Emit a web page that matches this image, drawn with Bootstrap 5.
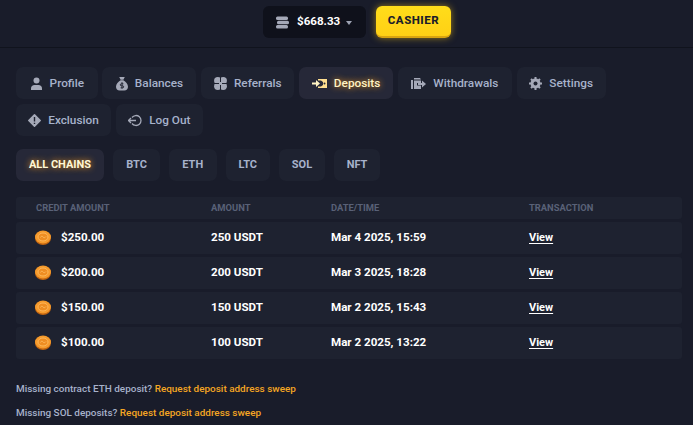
<!DOCTYPE html>
<html lang="en"><head><meta charset="utf-8"><title>Deposits</title>
<link rel="stylesheet" href="https://cdn.jsdelivr.net/npm/bootstrap@5.3.0/dist/css/bootstrap.min.css">
<style>
html,body{height:425px;overflow:hidden}
body{background:#191c2a;font-family:Roboto,"Liberation Sans",sans-serif;font-weight:500;color:#fff}
.topbar{height:48px;border-bottom:1px solid #10131d;padding:6px 0 0 263px;gap:10px}
.bal{width:103px;height:32px;background:#0f111b;border-radius:6px;font-size:11.6px;font-weight:700;padding-left:13px}
.bal svg{margin-right:8px}
.caret{width:0;height:0;border-left:3.5px solid transparent;border-right:3.5px solid transparent;border-top:4px solid #9ea3b3;margin-left:6px;margin-top:1px}
.cash{width:75px;height:32px;background:linear-gradient(#ffdd1a,#ffd015);border:0;border-bottom:2px solid #d9a410;border-radius:6px;box-shadow:0 0 7px rgba(255,200,20,.55);font-size:11.5px;font-weight:800;letter-spacing:.5px;color:#1b1d2a;padding:0}
.main{padding:19px 11px 0 16px}
.tabs{gap:5px 4.8px}
.tb{height:32px;background:#1e2230;border-radius:7px;font-size:11.8px;line-height:1;padding-top:1px;color:#a7b2cb;justify-content:center;gap:7px;text-decoration:none;white-space:nowrap}
.tb svg{flex:none}
.tb.on{color:#fff3c4;background:#262838;text-shadow:0 0 6px #ff9d1e}
.w-prof{width:81.7px}.w-bal{width:94px}.w-ref{width:93px}.w-dep{width:94px}.w-wd{width:114px}.w-set{width:89px}.w-exc{width:95px}.w-log{width:87px}
.chains{margin-top:13px;gap:9px}
.ch{height:32px;background:#1e2230;border-radius:7px;font-size:11px;font-weight:700;color:#a7b2cb;justify-content:center;text-decoration:none}
.ch.on{width:88px;background:#262838;color:#fff7d6;text-shadow:0 0 6px #ff9d1e}
.w-btc{width:47px}.w-eth{width:47.500px}.w-ltc{width:44.500px}.w-sol{width:46px}.w-nft{width:46px}
.tx{table-layout:fixed;width:666px;border-collapse:separate;border-spacing:0 3px;margin:13px 0 0;font-size:11.600px;color:#fff;font-weight:700}
.c1{width:195px}.c2{width:120px}.c3{width:198px}
.tx th{height:22px;padding:0;background:#1e2230;color:#596177;font-size:9.400px;font-weight:700;vertical-align:middle}
.tx td{height:32px;padding:0;background:#1e2230;vertical-align:middle}
.tx tr>*:first-child{padding-left:20px;border-radius:3px 0 0 3px}
.tx tr>*:last-child{border-radius:0 3px 3px 0}
.tx td:first-child{padding-left:19px}
.tx a{color:#fff;font-size:11px;text-underline-offset:2px}
.coin{margin-right:10px;vertical-align:-4px}
.foot{font-size:9.950px;color:#a7b2cb;height:24px;line-height:24px;margin:0}
.foot a{color:#f5a623;text-decoration:none}
.foots{margin-top:15px}
</style></head><body>
<svg width="0" height="0" class="position-absolute"><defs><g id="cn"><ellipse cx="8" cy="8" rx="8" ry="7" fill="#c2640f"/><ellipse cx="8" cy="7" rx="8" ry="6.500" fill="#f59a2c"/><ellipse cx="8" cy="7" rx="5" ry="4" fill="#ee8d22" stroke="#fdb75a"/><path d="M5.500 7.500c1-2 2-1.500 2.500-.5s2 1 3-.5" fill="none" stroke="#fdb75a"/></g></defs></svg>
<header class="topbar d-flex align-items-start">
 <div class="bal d-flex align-items-center">
  <svg width="13" height="13" viewBox="0 0 13 13" fill="#a5a9b8"><rect x="0" y="0.500" width="12" height="3.600" rx="1.500"/><rect x="1" y="4.700" width="12" height="3.600" rx="1.500"/><rect x="0" y="8.900" width="12" height="3.600" rx="1.500"/></svg>
  <span>$668.33</span><span class="caret"></span>
 </div>
 <button class="cash" type="button">CASHIER</button>
</header>
<main class="main">
 <nav class="tabs d-flex flex-wrap">
  <a class="tb w-prof d-flex align-items-center" href="#"><svg width="13" height="13" viewBox="0 0 13 13" fill="#a5a9b8"><circle cx="6.500" cy="3.500" r="3"/><path d="M1 13v-1.500C1 9.500 2.500 8 4.500 8h4c2 0 3.500 1.500 3.500 3.500V13z"/></svg>Profile</a>
  <a class="tb w-bal d-flex align-items-center" href="#"><svg width="12" height="15" viewBox="0 0 13 15" fill="#a5a9b8"><path d="M3.500.5h6L8 3.500H5zM5 4h3c2.500 1.500 5 4 5 7 0 2.500-1.500 4-4 4H4c-2.500 0-4-1.500-4-4 0-3 2.500-5.500 5-7z"/><path d="M6.500 6v7M8 7.800H5.800a1 1 0 0 0 0 2.200h1.400a1 1 0 0 1 0 2.200H5" stroke="#1e2230" fill="none"/></svg>Balances</a>
  <a class="tb w-ref d-flex align-items-center" href="#"><svg width="13" height="13" viewBox="0 0 13 13" fill="#a5a9b8"><circle cx="3.800" cy="3.800" r="3.700"/><circle cx="9.200" cy="3.800" r="3.700"/><circle cx="3.800" cy="9.200" r="3.700"/><circle cx="9.200" cy="9.200" r="3.700"/><rect x="6" y="0" width="1" height="13" fill="#1e2230"/><rect x="0" y="6" width="13" height="1" fill="#1e2230"/><rect x="5" y="5" width="3" height="3" fill="#a5a9b8"/></svg>Referrals</a>
  <a class="tb on w-dep d-flex align-items-center" href="#"><svg width="15" height="11" viewBox="0 0 15 11"><path d="M0 4.500h4V2l4 3.500L4 9V6.500H0z" fill="#fff3c4"/><path d="M6 1h9v9H6V8.500h3L11 7V4L9 2.500H6z" fill="#ffdf90"/><circle cx="12.500" cy="5.500" r="1" fill="#262838"/></svg>Deposits</a>
  <a class="tb w-wd d-flex align-items-center" href="#"><svg width="15" height="12" viewBox="0 0 15 12" fill="#a5a9b8"><path d="M0 2h2v9H0zM3 0h6l1 1.500H3zM3 2.500h7V5H6v2.500h4V11H3z"/><path d="M7 5h4V2.500L15 6l-4 3.500V7H7z"/></svg>Withdrawals</a>
  <a class="tb w-set d-flex align-items-center" href="#"><svg width="13" height="13" viewBox="0 0 13 13"><circle cx="6.500" cy="6.500" r="3.500" fill="none" stroke="#a5a9b8" stroke-width="3"/><path d="M6.500 0v13M0 6.500h13M2 2l9 9M11 2l-9 9" stroke="#a5a9b8" stroke-width="2"/><circle cx="6.500" cy="6.500" r="2" fill="#1e2230"/></svg>Settings</a>
  <a class="tb w-exc d-flex align-items-center" href="#"><svg width="13" height="13" viewBox="0 0 13 13"><path d="M6.500 .8 12.200 6.500 6.500 12.200 .8 6.500z" fill="#a5a9b8" stroke="#a5a9b8" stroke-linejoin="round" stroke-width="1.500"/><path d="M6.500 3v4.500M6.500 8.800v1.200" stroke="#1e2230" stroke-width="1.400"/></svg>Exclusion</a>
  <a class="tb w-log d-flex align-items-center" href="#"><svg width="14" height="13" viewBox="0 0 14 13" fill="none" stroke="#a5a9b8" stroke-width="1.300"><path d="M4 3.500A5 5 0 1 1 4 9.500M.5 6.500H8M3 4 .5 6.500 3 9"/></svg>Log Out</a>
 </nav>
 <nav class="chains d-flex">
  <a class="ch on d-flex align-items-center" href="#">ALL CHAINS</a>
  <a class="ch w-btc d-flex align-items-center" href="#">BTC</a>
  <a class="ch w-eth d-flex align-items-center" href="#">ETH</a>
  <a class="ch w-ltc d-flex align-items-center" href="#">LTC</a>
  <a class="ch w-sol d-flex align-items-center" href="#">SOL</a>
  <a class="ch w-nft d-flex align-items-center" href="#">NFT</a>
 </nav>
 <table class="tx">
  <colgroup><col class="c1"><col class="c2"><col class="c3"><col></colgroup>
  <thead><tr><th>CREDIT AMOUNT</th><th>AMOUNT</th><th>DATE/TIME</th><th>TRANSACTION</th></tr></thead>
  <tbody>
  <tr><td><svg class="coin" width="16" height="15" viewBox="0 0 16 15"><use href="#cn"/></svg>$250.00</td><td>250 USDT</td><td>Mar 4 2025, 15:59</td><td><a href="#">View</a></td></tr>
  <tr><td><svg class="coin" width="16" height="15" viewBox="0 0 16 15"><use href="#cn"/></svg>$200.00</td><td>200 USDT</td><td>Mar 3 2025, 18:28</td><td><a href="#">View</a></td></tr>
  <tr><td><svg class="coin" width="16" height="15" viewBox="0 0 16 15"><use href="#cn"/></svg>$150.00</td><td>150 USDT</td><td>Mar 2 2025, 15:43</td><td><a href="#">View</a></td></tr>
  <tr><td><svg class="coin" width="16" height="15" viewBox="0 0 16 15"><use href="#cn"/></svg>$100.00</td><td>100 USDT</td><td>Mar 2 2025, 13:22</td><td><a href="#">View</a></td></tr>
  </tbody>
 </table>
 <div class="foots">
  <p class="foot">Missing contract ETH deposit? <a href="#">Request deposit address sweep</a></p>
  <p class="foot">Missing SOL deposits? <a href="#">Request deposit address sweep</a></p>
 </div>
</main>
</body></html>
